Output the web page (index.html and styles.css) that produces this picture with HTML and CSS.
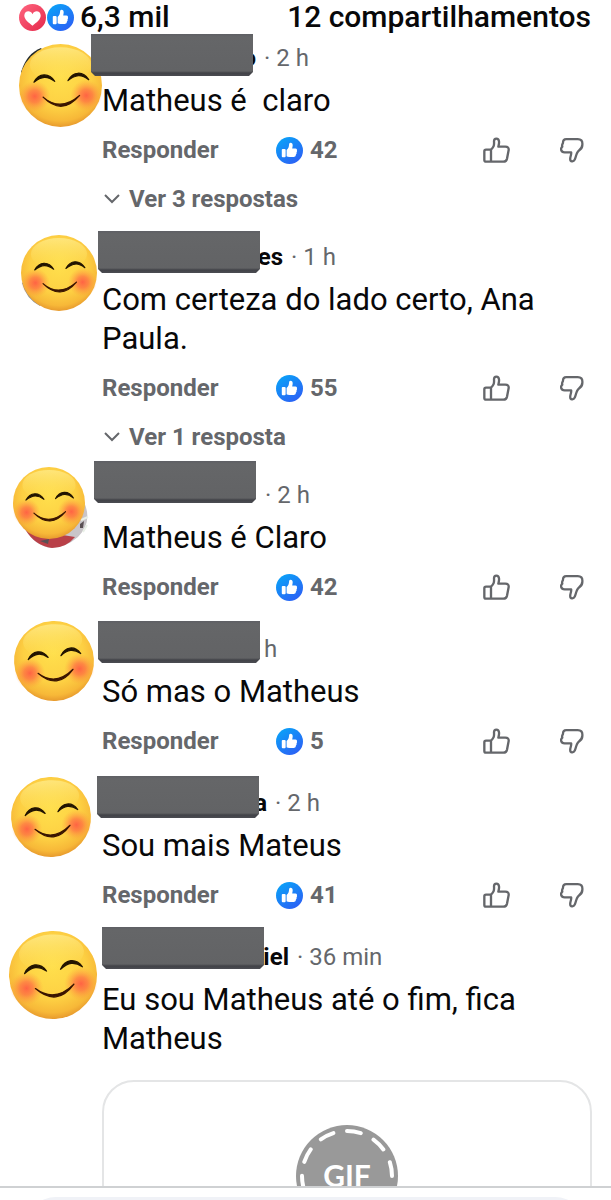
FILE: index.html
```html
<!DOCTYPE html>
<html lang="pt-BR">
<head>
<meta charset="utf-8">
<meta name="viewport" content="width=device-width, initial-scale=1">
<title>Comentários</title>
<link rel="stylesheet" href="styles.css">
</head>
<body>
<svg class="sprite" aria-hidden="true">
  <defs>
    <radialGradient id="skin" cx=".5" cy=".4" r=".62">
      <stop offset="0" stop-color="#ffdf4c"/><stop offset=".6" stop-color="#fdd043"/><stop offset=".85" stop-color="#f7b838"/><stop offset="1" stop-color="#e3922b"/>
    </radialGradient>
    <radialGradient id="blush"><stop offset="0" stop-color="#ff5844" stop-opacity=".9"/><stop offset=".4" stop-color="#ff6444" stop-opacity=".65"/><stop offset="1" stop-color="#ff9a3c" stop-opacity="0"/></radialGradient>
    <linearGradient id="shine" x1="0" y1="0" x2="0" y2="1"><stop offset="0" stop-color="#fff3a0" stop-opacity=".6"/><stop offset="1" stop-color="#ffe45e" stop-opacity="0"/></linearGradient>
    <linearGradient id="blue" x1="0" y1="0" x2=".7" y2="1"><stop offset="0" stop-color="#06a9f8"/><stop offset="1" stop-color="#2b62f5"/></linearGradient>
    <linearGradient id="red" x1="0" y1="0" x2="1" y2="1"><stop offset="0" stop-color="#ff6680"/><stop offset="1" stop-color="#e4284a"/></linearGradient>
  </defs>
  <symbol id="smile" viewBox="0 0 100 100">
    <circle cx="50" cy="50" r="50" fill="url(#skin)"/>
    <ellipse cx="50" cy="25" rx="37" ry="21" fill="url(#shine)"/>
    <circle cx="19" cy="63" r="19" fill="url(#blush)"/>
    <circle cx="81" cy="62" r="19" fill="url(#blush)"/>
    <path d="M18 46C24 35 36 34 43 45C34 38 27 39 18 46ZM59 44C65 33 77 32 84 43C75 36 68 37 59 44Z" fill="#221400" stroke="#221400" stroke-width="1.500" stroke-linejoin="round"/>
    <path d="M29 64Q50 82 73 62Q52 87 29 64Z" fill="#3a1500" stroke="#3a1500" stroke-width="1.500" stroke-linejoin="round"/>
  </symbol>
  <symbol id="like-badge" viewBox="0 0 28 28">
    <circle cx="14" cy="14" r="14" fill="url(#blue)"/>
    <rect x="6" y="12.500" width="4" height="8.500" rx="1" fill="#fff"/>
    <path d="M11 13.500C13 11.500 13.500 10 13.500 8Q13.500 6 15 6Q17.500 6.200 17.300 9L16.800 11.800H20.200Q22.200 12 21.700 13.800Q22.200 15 21.300 16Q21.700 17.300 20.700 18.200Q20.800 20.700 18.500 20.800H14Q12 20.800 11 20Z" fill="#fff"/>
  </symbol>
  <symbol id="heart-badge" viewBox="0 0 28 28">
    <circle cx="14" cy="14" r="14" fill="url(#red)"/>
    <path d="M14 22.500C10 19.500 5.500 16 5.500 12C5.500 7 12 6 14 10.500C16 6 22.500 7 22.500 12C22.500 16 18 19.500 14 22.500Z" fill="#fff"/>
  </symbol>
  <symbol id="thumb-up" viewBox="41 50 81 78">
    <path d="M65 124H50Q45 124 45 119V93Q45 88 50 88H65ZM65 88C73 80 75 76 74 63C74 52 88 52 89 63C90 69 88 74 87 79H108Q119 79 118 89L113 115Q111 124 102 124H62" fill="none" stroke="#65676b" stroke-width="7" stroke-linejoin="round"/>
  </symbol>
  <symbol id="thumb-down" viewBox="268 51 73 78">
    <path d="M287 57H322Q337 57 336 72C337 84 331 88 323 94C317 100 318 108 313 119C309 127 299 126 299 117C299 109 303 106 302 97H282C270 97 269 85 275 80C273 75 275 72 277 69C277 62 280 57 287 57Z" fill="none" stroke="#65676b" stroke-width="7" stroke-linejoin="round"/>
  </symbol>
  <symbol id="chevron" viewBox="0 0 18 12"><path d="M2 2L9 9L16 2" fill="none" stroke="#65676b" stroke-width="2"/></symbol>
</svg>

<header class="summary">
  <span class="reactions">
    <svg class="badge" role="img" aria-label="Amei"><use href="#heart-badge"/></svg>
    <svg class="badge" role="img" aria-label="Curtir"><use href="#like-badge"/></svg>
    <span class="total">6,3 mil</span>
  </span>
  <span>12 compartilhamentos</span>
</header>

<main class="feed">
  <article class="comment c1">
    <svg class="avatar" viewBox="0 0 83 83" aria-hidden="true"><path d="M2 28Q8 9 22 4L28 12L8 36Z" fill="#222a2c"/><use href="#smile" width="83" height="83"/></svg>
    <div class="meta"><span class="cover"></span><strong class="name">o</strong><span class="time">· 2 h</span></div>
    <p class="text">Matheus é&nbsp; claro</p>
    <div class="actions">
      <button class="reply">Responder</button>
      <span class="count"><svg class="badge"><use href="#like-badge"/></svg>42</span>
      <button class="vote" aria-label="Curtir"><svg class="up"><use href="#thumb-up"/></svg></button>
      <button class="vote" aria-label="Não curtir"><svg class="down"><use href="#thumb-down"/></svg></button>
    </div>
    <button class="more"><svg class="chevron"><use href="#chevron"/></svg>Ver 3 respostas</button>
  </article>

  <article class="comment c2">
    <svg class="avatar" viewBox="0 0 76 76" aria-hidden="true"><path d="M1 48Q5 64 19 71L24 64L8 42Z" fill="#8b8f93"/><use href="#smile" width="76" height="76"/></svg>
    <div class="meta"><span class="cover"></span><strong class="name">es</strong><span class="time">· 1 h</span></div>
    <p class="text">Com certeza do lado certo, Ana Paula.</p>
    <div class="actions">
      <button class="reply">Responder</button>
      <span class="count"><svg class="badge"><use href="#like-badge"/></svg>55</span>
      <button class="vote" aria-label="Curtir"><svg class="up"><use href="#thumb-up"/></svg></button>
      <button class="vote" aria-label="Não curtir"><svg class="down"><use href="#thumb-down"/></svg></button>
    </div>
    <button class="more"><svg class="chevron"><use href="#chevron"/></svg>Ver 1 resposta</button>
  </article>

  <article class="comment c3">
    <svg class="avatar" viewBox="0 0 72 72" aria-hidden="true"><path d="M71 35Q80 55 65 70Q52 81 38 81Q22 79 12 62L40 50Z" fill="#c9c5c9"/><path d="M12 62L62 70Q53 81 39 81Q22 79 12 62Z" fill="#b94048"/><path d="M27 74L36 72L35 77ZM67 57L71 54L70 61L67 61Z" fill="#5a5054"/><path d="M70 65L74 58M68 53L75 50" stroke="#e9f0e7" stroke-width="2"/><use href="#smile" width="72" height="72"/></svg>
    <div class="meta"><span class="cover"></span><strong class="name"></strong><span class="time">· 2 h</span></div>
    <p class="text">Matheus é Claro</p>
    <div class="actions">
      <button class="reply">Responder</button>
      <span class="count"><svg class="badge"><use href="#like-badge"/></svg>42</span>
      <button class="vote" aria-label="Curtir"><svg class="up"><use href="#thumb-up"/></svg></button>
      <button class="vote" aria-label="Não curtir"><svg class="down"><use href="#thumb-down"/></svg></button>
    </div>
  </article>

  <article class="comment c4">
    <svg class="avatar tilted" viewBox="0 0 80 80" aria-hidden="true"><use href="#smile" width="80" height="80"/></svg>
    <div class="meta"><span class="cover"></span><strong class="name"></strong><span class="time">h</span></div>
    <p class="text">Só mas o Matheus</p>
    <div class="actions">
      <button class="reply">Responder</button>
      <span class="count"><svg class="badge"><use href="#like-badge"/></svg>5</span>
      <button class="vote" aria-label="Curtir"><svg class="up"><use href="#thumb-up"/></svg></button>
      <button class="vote" aria-label="Não curtir"><svg class="down"><use href="#thumb-down"/></svg></button>
    </div>
  </article>

  <article class="comment c5">
    <svg class="avatar tilted" viewBox="0 0 80 80" aria-hidden="true"><use href="#smile" width="80" height="80"/></svg>
    <div class="meta"><span class="cover"></span><strong class="name">a</strong><span class="time">· 2 h</span></div>
    <p class="text">Sou mais Mateus</p>
    <div class="actions">
      <button class="reply">Responder</button>
      <span class="count"><svg class="badge"><use href="#like-badge"/></svg>41</span>
      <button class="vote" aria-label="Curtir"><svg class="up"><use href="#thumb-up"/></svg></button>
      <button class="vote" aria-label="Não curtir"><svg class="down"><use href="#thumb-down"/></svg></button>
    </div>
  </article>

  <article class="comment c6">
    <svg class="avatar tilted" viewBox="0 0 88 88" aria-hidden="true"><use href="#smile" width="88" height="88"/></svg>
    <div class="meta"><span class="cover"></span><strong class="name">iel</strong><span class="time">· 36 min</span></div>
    <p class="text">Eu sou Matheus até o fim, fica Matheus</p>
    <button class="gif" aria-label="Reproduzir GIF">
      <svg class="gif-disc" viewBox="0 0 102 102">
        <circle cx="51" cy="51" r="51" fill="#999"/>
        <circle cx="51" cy="51" r="45" fill="none" stroke="#fff" stroke-width="4" stroke-linecap="round" stroke-dasharray="14 14.270" transform="rotate(-90 51 51)"/>
        <text x="51" y="62" text-anchor="middle" class="gif-label">GIF</text>
      </svg>
    </button>
  </article>
</main>

<footer class="composer"><div class="field"></div></footer>
</body>
</html>
```
FILE: styles.css
```css
* { box-sizing: border-box; }

body {
  margin: 0;
  height: 100vh;
  display: flex;
  flex-direction: column;
  overflow: hidden;
  background: #fff;
  color: #080809;
  font-family: Roboto, "Liberation Sans", sans-serif;
}

button {
  padding: 0;
  border: 0;
  background: none;
  color: inherit;
  font: inherit;
}

svg { display: block; flex: none; overflow: visible; }
.sprite { position: absolute; width: 0; height: 0; }

.summary {
  flex: none;
  height: 34px;
  padding: 0 20px 0 19px;
  display: flex;
  align-items: center;
  justify-content: space-between;
  font-size: 30px;
  font-weight: 500;
  line-height: 34px;
}

.reactions { display: flex; align-items: center; }
.badge { width: 27px; height: 27px; }
.reactions .badge + .badge { margin-left: 1px; }
.total { margin-left: 6px; }

.feed {
  flex: 1;
  min-height: 0;
  padding-top: 6px;
  overflow: hidden;
}

.comment {
  position: relative;
  padding: 0 19px 19px 102px;
}

/* stickers and cover bars lie over the original avatar and name */
.avatar {
  position: absolute;
  left: var(--face-x);
  top: var(--face-y);
  width: var(--face);
  height: var(--face);
}
.tilted { transform: rotate(-4deg); }

.cover {
  position: absolute;
  left: var(--bar-x);
  top: var(--bar-y);
  width: 162px;
  height: 42px;
  background: linear-gradient(#5e5f64, #656668 3px, #626365 37px, #414247 39px, #4b4c52);
  clip-path: polygon(0 0, 100% 0, 100% 38px, 158px 100%, 4px 100%, 0 38px);
}

.c1 { --face-x: 19px; --face-y: 4px;  --face: 83px; --bar-x: 91px;  --bar-y: -6px; --name: 154px; }
.c2 { --face-x: 21px; --face-y: -4px; --face: 76px; --bar-x: 98px;  --bar-y: -8px; --name: 181px; }
.c3 { --face-x: 13px; --face-y: -10px; --face: 72px; --bar-x: 94px; --bar-y: -16px; --name: 155px; }
.c4 { --face-x: 14px; --face-y: -10px; --face: 80px; --bar-x: 98px; --bar-y: -10px; --name: 154px; }
.c5 { --face-x: 11px; --face-y: -8px; --face: 80px; --bar-x: 97px;  --bar-y: -9px; --name: 165px; }
.c6 { --face-x: 9px;  --face-y: -8px; --face: 88px; --bar-x: 102px; --bar-y: -12px; --name: 187px; }

.meta {
  display: flex;
  align-items: center;
  gap: 8px;
  height: 36px;
  font-size: 24px;
}
.name {
  width: var(--name);
  text-align: right;
  font-weight: 700;
}
.time { color: #65676b; }

.text {
  margin: 5px 0;
  font-size: 31px;
  line-height: 39px;
}

.actions {
  display: flex;
  align-items: center;
  height: 50px;
  padding-right: 8px;
  color: #65676b;
  font-size: 24px;
  font-weight: 700;
}
.reply { width: 174px; text-align: left; }
.count { display: flex; align-items: center; gap: 7px; margin-right: auto; }
.vote + .vote { margin-left: 50px; }
.up { width: 27px; height: 26px; }
.down { width: 24px; height: 26px; }

.more {
  display: flex;
  align-items: center;
  gap: 8px;
  height: 45px;
  padding: 3px 0 0 1px;
  color: #65676b;
  font-size: 24px;
  font-weight: 700;
}
.chevron { width: 18px; height: 12px; }

.gif {
  display: flex;
  justify-content: center;
  width: 100%;
  height: 230px;
  margin-top: 22px;
  padding-top: 43px;
  border: 2px solid #e4e5e6;
  border-radius: 32px;
}
.gif-disc { width: 102px; height: 102px; }
.gif-label { fill: #fff; font: 700 30px Lato, sans-serif; }

.composer {
  flex: none;
  height: 14px;
  padding: 9px 26px 0;
  border-top: 2px solid #cfd1d3;
  overflow: hidden;
}
.field { height: 60px; border-radius: 30px; background: #f0f2f7; }
```
